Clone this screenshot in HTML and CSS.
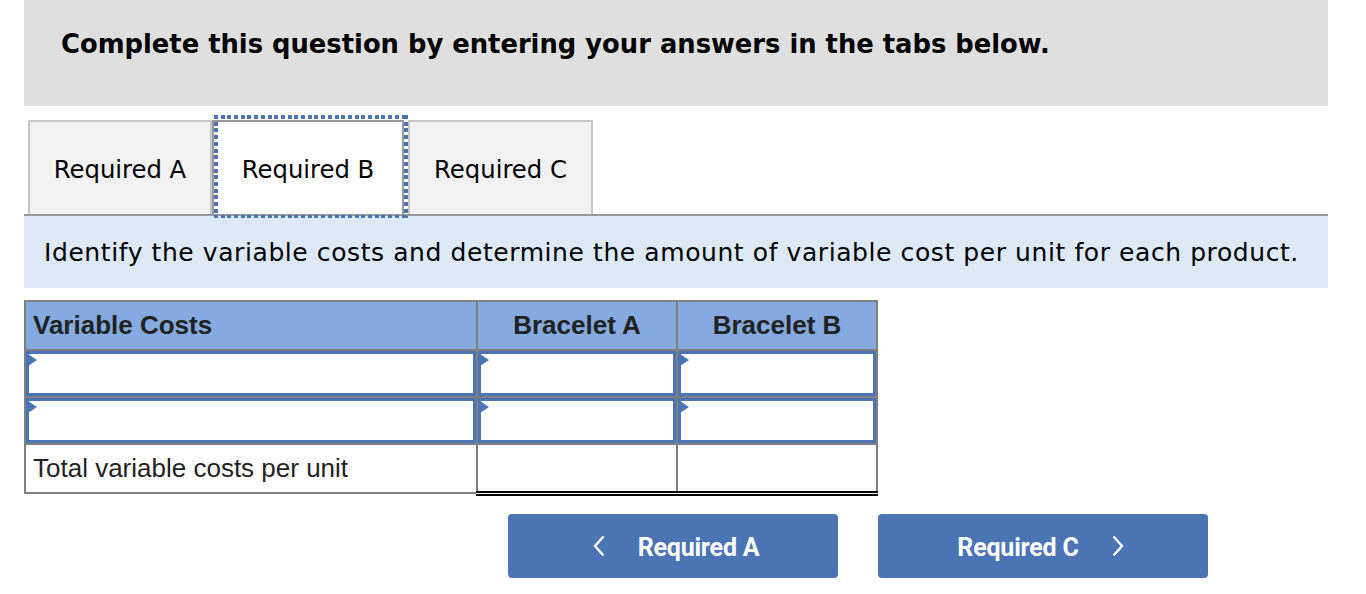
FILE: index.html
```html
<!DOCTYPE html>
<html>
<head>
<meta charset="utf-8">
<link rel="stylesheet" href="styles.css">
</head>
<body>
<div class="page">
  <div class="prompt">
    <h1 class="prompt-text">Complete this question by entering your answers in the tabs below.</h1>
  </div>
  <div class="tabs">
    <div class="tab tab-a">Required A</div>
    <div class="tab tab-b active">Required B</div>
    <div class="tab tab-c">Required C</div>
  </div>
  <div class="instructions">Identify the variable costs and determine the amount of variable cost per unit for each product.</div>
  <table class="costs">
    <colgroup>
      <col class="c1"><col class="c2"><col class="c3">
    </colgroup>
    <thead>
      <tr class="head">
        <th class="label-head">Variable Costs</th>
        <th>Bracelet A</th>
        <th>Bracelet B</th>
      </tr>
    </thead>
    <tbody>
      <tr class="input-row">
        <td><div class="field"><span class="flag"></span></div></td>
        <td><div class="field"><span class="flag"></span></div></td>
        <td><div class="field"><span class="flag"></span></div></td>
      </tr>
      <tr class="input-row">
        <td><div class="field"><span class="flag"></span></div></td>
        <td><div class="field"><span class="flag"></span></div></td>
        <td><div class="field"><span class="flag"></span></div></td>
      </tr>
      <tr class="total-row">
        <td class="total-label">Total variable costs per unit</td>
        <td class="total-cell"></td>
        <td class="total-cell"></td>
      </tr>
    </tbody>
  </table>
  <div class="nav">
    <button class="nav-btn prev">
      <svg class="chev" width="12" height="22" viewBox="0 0 12 22"><polyline points="10.5,1.5 2,11 10.5,20.5" fill="none" stroke="#fff" stroke-width="2.4"/></svg>
      <span>Required A</span>
    </button>
    <button class="nav-btn next">
      <span>Required C</span>
      <svg class="chev" width="12" height="22" viewBox="0 0 12 22"><polyline points="1.5,1.5 10,11 1.5,20.5" fill="none" stroke="#fff" stroke-width="2.4"/></svg>
    </button>
  </div>
</div>
</body>
</html>
```
FILE: styles.css
```css
* { box-sizing: border-box; }
html, body { margin: 0; padding: 0; background: #fff; }
.page { width: 1366px; padding: 0 38px 0 24px; }

.prompt {
  height: 106px;
  background: #dfdfdf;
  padding: 30px 0 0 37px;
}
.prompt-text {
  margin: 0;
  font-family: "DejaVu Sans", Verdana, sans-serif;
  font-weight: bold;
  font-size: 25.8px;
  line-height: 28px;
  color: #000;
}

.tabs {
  display: flex;
  margin-top: 14px;
  padding-left: 4px;
  height: 96px;
  border-bottom: 2px solid #999;
}
.tab {
  display: flex;
  align-items: center;
  justify-content: center;
  font-family: "DejaVu Sans", Verdana, sans-serif;
  font-size: 24.3px;
  color: #000;
  background: #f1f1f1;
  border: 2px solid #c6c6c6;
  border-bottom: none;
  padding-top: 2px;
}
.tab-a { width: 184px; }
.tab-b {
  width: 192px;
  margin-right: 4px;
  background: #fff;
  border-color: #999;
  position: relative;
}
.tab-b::after {
  content: "";
  position: absolute;
  left: 0; right: -6px; top: -7px; bottom: -4px;
  background:
    repeating-linear-gradient(90deg, #4a74b4 0 4px, transparent 4px 6.7px) top left / 100% 4px no-repeat,
    repeating-linear-gradient(90deg, #4a74b4 0 4px, transparent 4px 6.7px) bottom left / 100% 3px no-repeat,
    repeating-linear-gradient(180deg, #4a74b4 0 4px, transparent 4px 6.7px) top left / 4px 100% no-repeat,
    repeating-linear-gradient(180deg, #4a74b4 0 4px, transparent 4px 6.7px) top right / 4px 100% no-repeat;
}
.tab-c { width: 185px; }

.instructions {
  height: 72px;
  background: #dde9f7;
  padding: 22px 0 0 20px;
  font-family: "DejaVu Sans", Verdana, sans-serif;
  font-size: 25px;
  letter-spacing: 0.58px;
  line-height: 30px;
  color: #000;
}

.costs {
  margin-top: 12px;
  border-collapse: collapse;
  width: 852px;
  table-layout: fixed;
  font-family: "Liberation Sans", Arial, sans-serif;
  color: #222;
}
.c1 { width: 452px; }
.c2 { width: 200px; }
.c3 { width: 200px; }
.costs th, .costs td {
  border: 2px solid #7f7f7f;
  padding: 0;
}
.head th {
  height: 49px;
  background: #84aadf;
  font-size: 26px;
  font-weight: bold;
  text-align: center;
}
.head .label-head { text-align: left; padding-left: 7px; }
.input-row td { height: 47px; padding: 0; }
.field {
  position: relative;
  height: 45px;
  border: 3px solid #4a74b4;
  background: #fff;
}
.flag {
  position: absolute;
  left: -1px; top: 0;
  width: 0; height: 0;
  border-top: 6px solid transparent;
  border-bottom: 6px solid transparent;
  border-left: 9px solid #4a74b4;
}
.total-row td { height: 49px; }
.total-label {
  font-size: 26px;
  padding-left: 7px !important;
  color: #222;
}
.costs .total-cell {
  border-top: 2px solid #000;
  border-bottom: 5px double #000;
}

.nav {
  display: flex;
  gap: 40px;
  margin-top: 18px;
  padding-left: 484px;
}
.nav-btn {
  width: 330px;
  height: 64px;
  border: none;
  border-radius: 4px;
  background: #4a74b3;
  color: #fff;
  font-family: Roboto, "Liberation Sans", sans-serif;
  font-weight: bold;
  font-size: 25px;
  letter-spacing: -0.2px;
  display: flex;
  align-items: center;
  justify-content: center;
  gap: 33px;
  padding: 3px 0 0 0;
}
.prev { padding-left: 6px; }
.next { padding-right: 5px; }
.chev { display: block; margin-top: -3px; }
```
